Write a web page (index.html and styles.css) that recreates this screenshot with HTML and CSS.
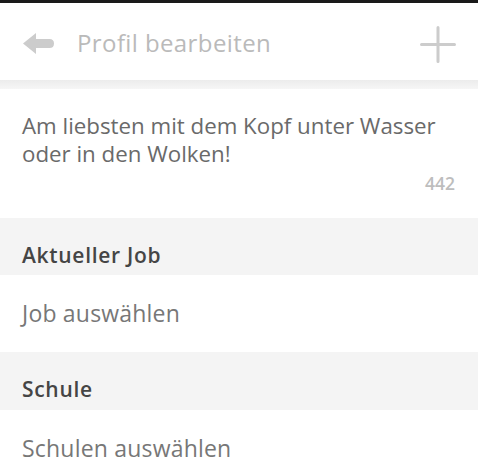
FILE: index.html
```html
<!DOCTYPE html>
<html>
<head>
  <meta charset="utf-8">
  <title>Profil bearbeiten</title>
  <meta name="viewport" content="width=device-width, initial-scale=1">
  <link rel="stylesheet" href="styles.css">
</head>
<body>
  <div class="topline"></div>
  <header class="bar">
    <svg class="back" width="31" height="21" viewBox="0 0 31 21">
      <path d="M0 10.5 L13 0 L13 6 L26.5 6 Q31 6 31 10.5 Q31 15 26.5 15 L13 15 L13 21 Z" fill="#cccccc"/>
    </svg>
    <h1 class="title">Profil bearbeiten</h1>
    <svg class="add" width="36" height="37" viewBox="0 0 36 37">
      <path d="M18 1.5 V35.5 M1.5 18.5 H34.5" stroke="#cccccc" stroke-width="3" stroke-linecap="round"/>
    </svg>
  </header>
  <div class="shade"></div>

  <section class="bio">
    <p class="bio-text">Am liebsten mit dem Kopf unter Wasser oder in den Wolken!</p>
    <div class="count">442</div>
  </section>

  <div class="label">Aktueller Job</div>
  <div class="row">Job auswählen</div>

  <div class="label label-last">Schule</div>
  <div class="row">Schulen auswählen</div>
</body>
</html>
```

FILE: styles.css
```css
body {
  margin: 0;
  font-family: "Open Sans", Lato, sans-serif;
  font-variant-ligatures: none;
  background: #ffffff;
}
.topline { height: 3px; background: #1a1a1a; }
.bar {
  display: flex;
  align-items: center;
  height: 77px;
  padding: 0 22px 0 23px;
  background: #ffffff;
}
.back { margin-top: 4px; }
.title {
  flex: 1;
  margin: 0 0 0 23px;
  padding-top: 2px;
  font-size: 24px;
  line-height: 28px;
  letter-spacing: 0.4px;
  font-weight: 400;
  color: #bababa;
}
.add { margin-top: 5px; }
.shade {
  height: 9px;
  background: linear-gradient(#ececec, #f6f6f6);
}
.bio {
  box-sizing: border-box;
  height: 129px;
  padding: 23px 22px 0;
}
.bio-text {
  margin: 0;
  font-size: 22.3px;
  line-height: 28px;
  color: #6a6a6a;
}
.count {
  margin: 5px 1px 0 0;
  text-align: right;
  font-size: 17.5px;
  line-height: 20px;
  font-weight: 600;
  color: #bdbdbd;
}
.label {
  box-sizing: border-box;
  height: 57px;
  padding: 23px 22px 0;
  background: #f4f4f4;
  font-size: 21px;
  line-height: 28px;
  letter-spacing: 0.7px;
  font-weight: 600;
  color: #454545;
}
.label-last { height: 58px; }
.row {
  box-sizing: border-box;
  height: 77px;
  padding: 24px 22px 0;
  font-size: 23px;
  line-height: 28px;
  letter-spacing: 0.2px;
  color: #777777;
}
```
